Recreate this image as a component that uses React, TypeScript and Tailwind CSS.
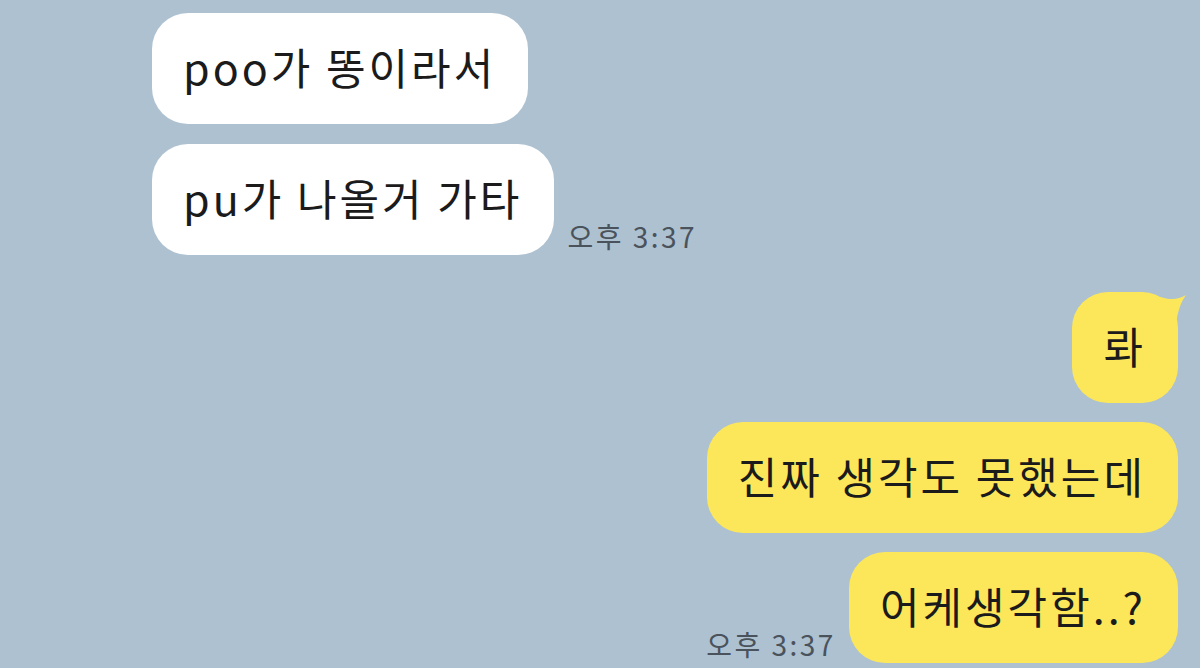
import type { ReactNode } from 'react'

const font = { fontFamily: '"Noto Sans CJK KR", "Noto Sans", sans-serif' }

function Bubble({ children, mine = false, tail = false }: { children: ReactNode; mine?: boolean; tail?: boolean }) {
  return (
    <div
      className={`relative flex h-[111px] items-center rounded-[36px] pl-[31px] pr-[32px] text-[43px] leading-none tracking-[3px] text-[#1b1b1b] ${
        mine ? 'bg-[#fce75a]' : 'bg-white'
      }`}
    >
      {tail && (
        <svg className="absolute -right-[8px] top-[2px]" width="30" height="30" viewBox="0 0 30 30">
          <path d="M4 3 C14 6 22 6 30 1 C25 8 22 16 20 30 L4 30 Z" fill="#fce75a" />
        </svg>
      )}
      <span className="relative -translate-y-[2px]">{children}</span>
    </div>
  )
}

function Time() {
  return <span className="mb-[5px] text-[28px] leading-none tracking-[2.5px] text-[#4a525b]">오후 3:37</span>
}

export default function App() {
  return (
    <main className="h-[668px] w-[1200px] overflow-hidden bg-[#adc1d1]" style={font}>
      {/* received */}
      <section className="flex flex-col items-start gap-[20px] pl-[152px] pt-[13px]">
        <Bubble>poo가 똥이라서</Bubble>
        <div className="flex items-end gap-[13px]">
          <Bubble>pu가 나올거 가타</Bubble>
          <Time />
        </div>
      </section>

      {/* sent */}
      <section className="mt-[37px] flex flex-col items-end gap-[19px] pr-[22px]">
        <Bubble mine tail>
          롸
        </Bubble>
        <Bubble mine>진짜 생각도 못했는데</Bubble>
        <div className="flex items-end gap-[13px]">
          <Time />
          <Bubble mine>어케생각함..?</Bubble>
        </div>
      </section>
    </main>
  )
}
